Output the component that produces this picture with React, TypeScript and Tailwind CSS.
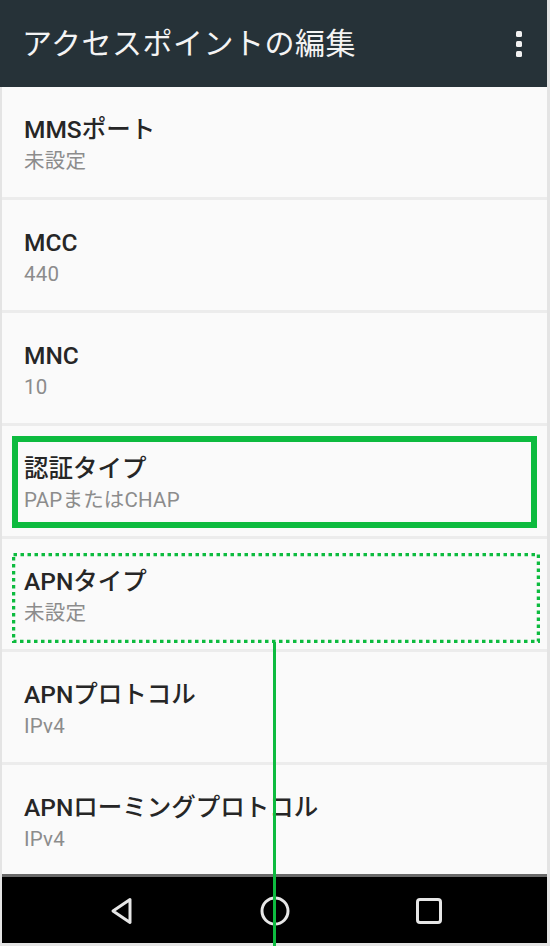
import React from 'react';

type Pref = { label: string; value: string; mark?: 'solid' | 'dotted' };

const prefs: Pref[] = [
  { label: 'MMSポート', value: '未設定' },
  { label: 'MCC', value: '440' },
  { label: 'MNC', value: '10' },
  { label: '認証タイプ', value: 'PAPまたはCHAP', mark: 'solid' },
  { label: 'APNタイプ', value: '未設定', mark: 'dotted' },
  { label: 'APNプロトコル', value: 'IPv4' },
  { label: 'APNローミングプロトコル', value: 'IPv4' },
];

const Kebab = () => (
  <svg width="12" height="32" viewBox="0 0 12 32" fill="#f2f2f2">
    <rect x="3" y="3" width="6" height="6" rx="1.5" />
    <rect x="3" y="13" width="6" height="6" rx="1.5" />
    <rect x="3" y="23" width="6" height="6" rx="1.5" />
  </svg>
);

const PrefRow = ({ p }: { p: Pref }) => (
  <div className="relative h-[110px] shrink-0 bg-[#fafafa] pl-[22px] pr-6 pt-[28px]">
    <p className="text-[24.5px] leading-[29px] font-medium text-[#262626]">{p.label}</p>
    <p className="mt-[4px] text-[20.5px] leading-[26px] tracking-[0.2px] text-[#8c8c8c]">{p.value}</p>

    {/* 選択中の項目を囲む枠 */}
    {p.mark === 'solid' && (
      <div className="absolute left-[10px] right-[10px] top-[10px] h-[92px] border-[6px] border-[#0dbb3f]" />
    )}
    {p.mark === 'dotted' && (
      <svg className="absolute left-[10px] top-[14px]" width="528" height="90">
        <rect
          x="1.5"
          y="1.5"
          width="525"
          height="87"
          fill="none"
          stroke="#0dbb3f"
          strokeWidth="3.5"
          strokeDasharray="3.5 3.5"
        />
      </svg>
    )}
  </div>
);

export default function App() {
  return (
    <div className="relative w-[550px] h-[946px] overflow-hidden flex flex-col bg-[#e4e4e4] pl-[2px] pr-[3px] pb-[3px] font-['Roboto','Noto_Sans_CJK_JP',sans-serif]">
      <header className="h-[87px] shrink-0 bg-[#263238] flex items-center justify-between pl-[22px] pr-[22px] -ml-[2px]">
        <h1 className="text-[30px] leading-none text-[#f4f4f4] tracking-[0.5px]">アクセスポイントの編集</h1>
        <Kebab />
      </header>

      <main className="flex-1 overflow-hidden flex flex-col gap-[3px] bg-[#ececec]">
        {prefs.map((p) => (
          <PrefRow key={p.label} p={p} />
        ))}
      </main>

      <nav className="h-[69px] shrink-0 bg-black border-t-[3px] border-[#6a6a6a] flex items-center justify-center pt-[2px]">
        <div className="w-[154px] flex justify-center">
          <svg width="30" height="30" viewBox="0 0 30 30" fill="none" stroke="#e6e6e6" strokeWidth="3" strokeLinejoin="round">
            <path d="M24 3.5 L7 15 L24 26.5 Z" />
          </svg>
        </div>
        <div className="w-[154px] flex justify-center">
          <svg width="32" height="32" viewBox="0 0 32 32" fill="none" stroke="#e6e6e6" strokeWidth="3">
            <circle cx="16" cy="16" r="13" />
          </svg>
        </div>
        <div className="w-[154px] flex justify-center">
          <svg width="30" height="30" viewBox="0 0 30 30" fill="none" stroke="#e6e6e6" strokeWidth="3">
            <rect x="3.5" y="3.5" width="23" height="23" rx="2.5" />
          </svg>
        </div>
      </nav>

      {/* 引き出し線 */}
      <div className="absolute left-[273px] top-[642px] bottom-0 w-[3px] bg-[#0dbb3f]" />
    </div>
  );
}
